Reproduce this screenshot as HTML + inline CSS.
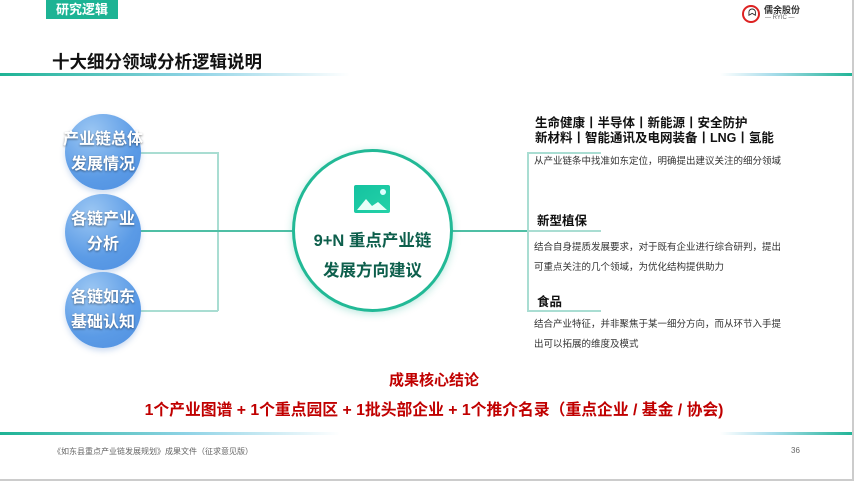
<!DOCTYPE html>
<html><head><meta charset="utf-8"><style>
*{margin:0;padding:0;box-sizing:border-box}
body{width:854px;height:481px;background:#fff;position:relative;overflow:hidden;font-family:"Liberation Sans","Noto Sans CJK SC",sans-serif}
.a{position:absolute}
.tag{left:46px;top:0;width:72px;height:19px;background:#1db394;color:#fff;font-size:13px;font-weight:bold;text-align:center;line-height:19px}
.title{left:52px;top:49px;font-size:17.5px;font-weight:bold;color:#111}
.bar{height:3px}
.bc{width:76px;height:76px;border-radius:50%;background:radial-gradient(circle at 35% 25%,#9cc7f3,#5b9be6 60%,#4f8fe0);color:#fff;font-weight:bold;font-size:16px;text-align:center;line-height:25px;display:flex;align-items:center;justify-content:center;text-shadow:0 1px 2px rgba(0,0,0,.45);box-shadow:0 3px 6px rgba(90,140,210,.3);white-space:nowrap}
.ln{background:#a9ddd2}
.rt{font-size:12.5px;font-weight:bold;color:#111}
.rs{font-size:9.5px;color:#333;line-height:20px}
</style></head><body>
<div class="a tag">研究逻辑</div>
<div class="a" style="left:742px;top:5px;width:18px;height:18px;border:2px solid #d22;border-radius:50%"></div>
<div class="a" style="left:748px;top:8px;font-size:10px;color:#222">ᗣ</div>
<div class="a" style="left:764px;top:3px;font-size:9px;font-weight:bold;color:#333">儒余股份</div>
<div class="a" style="left:765px;top:15px;font-size:6px;color:#666">— RYIC —</div>
<div class="a title">十大细分领域分析逻辑说明</div>
<div class="a bar" style="left:0;top:73px;width:350px;background:linear-gradient(90deg,#1db394,#8fd3e6 55%,rgba(255,255,255,0))"></div>
<div class="a bar" style="left:720px;top:73px;width:134px;background:linear-gradient(90deg,rgba(255,255,255,0),#a6dcea 40%,#1db394)"></div>

<div class="a ln" style="left:140px;top:152px;width:78px;height:1.5px"></div>
<div class="a ln" style="left:140px;top:310px;width:78px;height:1.5px"></div>
<div class="a ln" style="left:217px;top:152px;width:1.5px;height:159px"></div>
<div class="a" style="left:140px;top:230px;width:153px;height:1.5px;background:#4fbfa5"></div>
<div class="a" style="left:450px;top:230px;width:78px;height:1.5px;background:#4fbfa5"></div>
<div class="a ln" style="left:527px;top:152px;width:1.5px;height:159px"></div>
<div class="a ln" style="left:527px;top:152px;width:74px;height:1.5px"></div>
<div class="a ln" style="left:527px;top:230px;width:74px;height:1.5px"></div>
<div class="a ln" style="left:527px;top:310px;width:74px;height:1.5px"></div>

<div class="a bc" style="left:65px;top:114px">产业链总体<br>发展情况</div>
<div class="a bc" style="left:65px;top:194px">各链产业<br>分析</div>
<div class="a bc" style="left:65px;top:272px">各链如东<br>基础认知</div>

<div class="a" style="left:292px;top:149px;width:161px;height:163px;border-radius:50%;border:3px solid #22b996;background:#fff;box-shadow:0 2px 8px rgba(30,180,150,.3)"></div>
<svg class="a" style="left:354px;top:185px" width="36" height="28" viewBox="0 0 36 28"><defs><linearGradient id="g" x1="0" y1="0" x2="1" y2="1"><stop offset="0" stop-color="#14c2a0"/><stop offset="1" stop-color="#25d2a8"/></linearGradient></defs><rect width="36" height="28" rx="2" fill="url(#g)"/><circle cx="29" cy="7" r="3" fill="#dff"/><path d="M3 25 L12 14 L18 21 L24 17 L33 25Z" fill="#e8fff8"/></svg>
<div class="a" style="left:292px;top:226px;width:161px;text-align:center;font-size:16.5px;font-weight:bold;color:#0d5f4c;line-height:30px">9+N 重点产业链<br>发展方向建议</div>

<div class="a rt" style="left:535px;top:116px;line-height:15px">生命健康丨半导体丨新能源丨安全防护<br>新材料丨智能通讯及电网装备丨LNG丨氢能</div>
<div class="a rs" style="left:534px;top:152px">从产业链条中找准如东定位，明确提出建议关注的细分领域</div>
<div class="a rt" style="left:537px;top:210px">新型植保</div>
<div class="a rs" style="left:534px;top:238px">结合自身提质发展要求，对于既有企业进行综合研判，提出<br>可重点关注的几个领域，为优化结构提供助力</div>
<div class="a rt" style="left:537px;top:291px">食品</div>
<div class="a rs" style="left:534px;top:315px">结合产业特征，并非聚焦于某一细分方向，而从环节入手提<br>出可以拓展的维度及模式</div>

<div class="a" style="left:0;top:369px;width:868px;text-align:center;font-size:15px;font-weight:bold;color:#c00000">成果核心结论</div>
<div class="a" style="left:0;top:397px;width:868px;text-align:center;font-size:15.8px;font-weight:bold;color:#c00000;white-space:nowrap">1个产业图谱 + 1个重点园区 + 1批头部企业 + 1个推介名录（重点企业 / 基金 / 协会)</div>

<div class="a bar" style="left:0;top:432px;width:340px;background:linear-gradient(90deg,#1db394,#8fd3e6 55%,rgba(255,255,255,0))"></div>
<div class="a bar" style="left:720px;top:432px;width:134px;background:linear-gradient(90deg,rgba(255,255,255,0),#a6dcea 40%,#1db394)"></div>
<div class="a" style="left:53px;top:446px;font-size:8px;color:#666">《如东县重点产业链发展规划》成果文件（征求意见版）</div>
<div class="a" style="left:791px;top:446px;font-size:8px;color:#666">36</div>
<div class="a" style="left:852px;top:0;width:2px;height:481px;background:#ccc"></div>
<div class="a" style="left:0;top:479px;width:854px;height:2px;background:#ccc"></div>
</body></html>
